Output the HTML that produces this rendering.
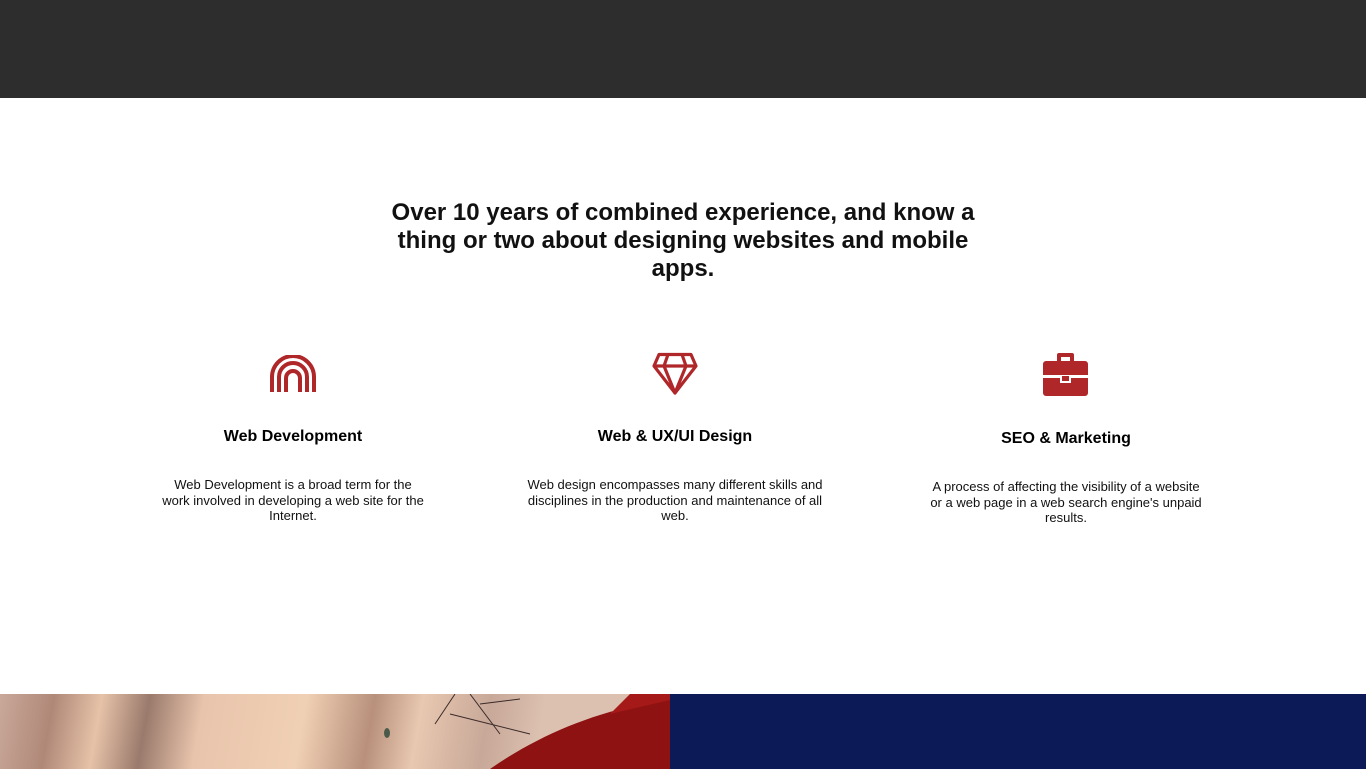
<!DOCTYPE html>
<html><head><meta charset="utf-8"><style>
*{margin:0;padding:0;box-sizing:border-box}
body{width:1366px;height:769px;overflow:hidden;background:#fff;font-family:"Liberation Sans",Arial,sans-serif;color:#000;position:relative}
.top{position:absolute;left:0;top:0;width:1366px;height:98px;background:#2d2d2d}
h1{position:absolute;left:373px;width:620px;top:199px;text-align:center;font-size:24px;line-height:28px;font-weight:bold;color:#111}
.t{position:absolute;text-align:center;font-size:16px;font-weight:bold;width:300px}
.d{position:absolute;text-align:center;font-size:13px;line-height:15.5px;color:#111}
svg{position:absolute}
.img{position:absolute;left:0;top:694px;width:670px;height:75px;overflow:hidden;background:linear-gradient(100deg,#c9a89a 0%,#b08878 8%,#e6c2a8 15%,#9a7a6c 22%,#e8c4ac 30%,#f0d0b4 45%,#b8907c 55%,#e8c8b0 62%,#c8a898 72%,#dcc0b0 80%)}
.navy{position:absolute;left:670px;top:694px;width:696px;height:75px;background:#0c1a58}
</style></head><body>
<div class="top"></div>
<h1>Over 10 years of combined experience, and know a thing or two about designing websites and mobile apps.</h1>

<svg style="left:269px;top:355px" width="48" height="38" viewBox="0 0 48 38"><g fill="none" stroke="#b0272a" stroke-width="4"><path d="M3 37V22A21 21 0 0 1 45 22V37"/><path d="M10 37V22A14 14 0 0 1 38 22V37"/><path d="M17 37V23A7 7 0 0 1 31 23V37"/></g></svg>

<svg style="left:651px;top:352px" width="48" height="44" viewBox="0 0 48 44"><g fill="none" stroke="#b0272a" stroke-width="3.2" stroke-linejoin="round"><path d="M8 2.5H40L45 14L24 41L3 14Z"/><path d="M3 14H45M17 2.5L13 14L24 41L35 14L31 2.5"/></g></svg>

<svg style="left:1042px;top:353px" width="47" height="43" viewBox="0 0 47 43"><path fill="#b0272a" d="M15 2a2 2 0 0 1 2-2h13a2 2 0 0 1 2 2v6h11a3 3 0 0 1 3 3v11H1V11a3 3 0 0 1 3-3h11zM19 4v4h9V4zM1 25h17v5h11v-5h17v15a3 3 0 0 1-3 3H4a3 3 0 0 1-3-3zM20 23h7v5h-7z"/></svg>

<div class="t" style="left:143px;top:428px">Web Development</div>
<div class="t" style="left:525px;top:428px">Web &amp; UX/UI Design</div>
<div class="t" style="left:916px;top:430px">SEO &amp; Marketing</div>

<div class="d" style="left:159px;width:268px;top:477px">Web Development is a broad term for the work involved in developing a web site for the Internet.</div>
<div class="d" style="left:525px;width:300px;top:477px">Web design encompasses many different skills and disciplines in the production and maintenance of all web.</div>
<div class="d" style="left:928px;width:276px;top:479px">A process of affecting the visibility of a website or a web page in a web search engine's unpaid results.</div>

<div class="img"><svg style="left:0;top:0" width="670" height="75"><path d="M455 0l-20 30M470 0l30 40M480 10l40 -5M450 20l80 20" stroke="#3a2a28" stroke-width="1" fill="none"/><path d="M490 75C540 40 600 15 670 5V75Z" fill="#8e1212"/><path d="M630 0L670 0V6L610 20Z" fill="#a51a18"/><ellipse cx="387" cy="39" rx="3" ry="5" fill="#4a5a4a"/></svg></div>
<div class="navy"></div>
</body></html>
